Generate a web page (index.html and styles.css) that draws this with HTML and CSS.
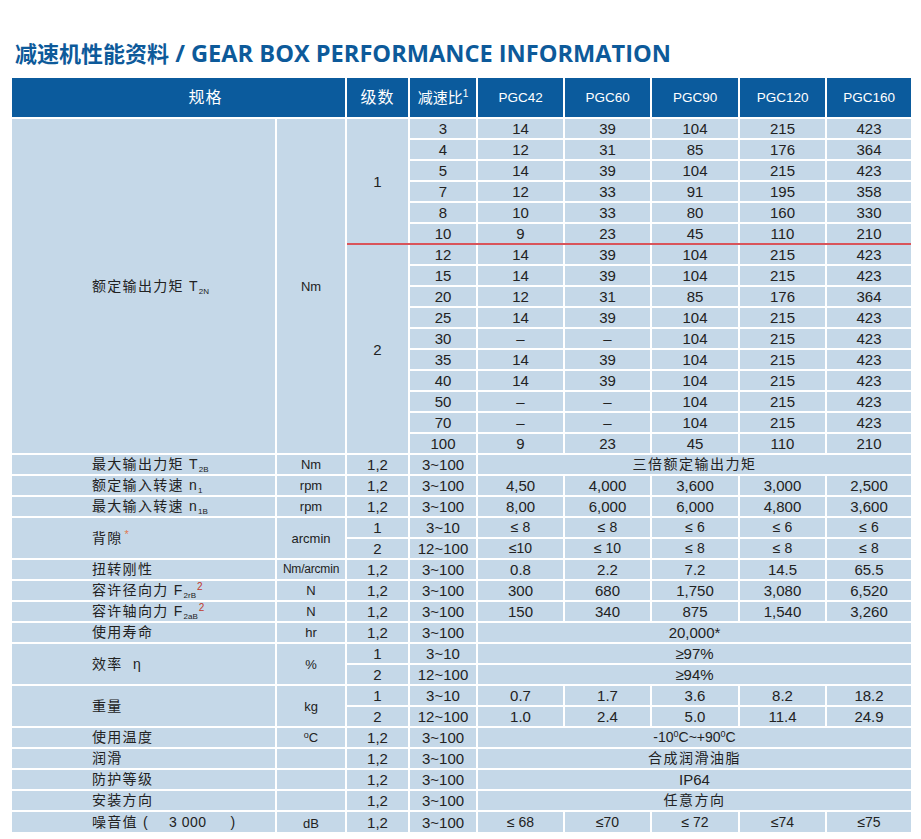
FILE: index.html
```html
<!DOCTYPE html>
<html lang="zh-CN">
<head>
<meta charset="utf-8">
<title>减速机性能资料</title>
<link rel="stylesheet" href="styles.css">
</head>
<body>
<div class="page">
  <h1 class="title"><span class="cn">减速机性能资料</span> / GEAR BOX PERFORMANCE INFORMATION</h1>
  <table class="spec">
    <colgroup>
      <col class="c-label"><col class="c-unit"><col class="c-stage"><col class="c-ratio">
      <col class="c-m1"><col class="c-m2"><col class="c-m3"><col class="c-m4"><col class="c-m5">
    </colgroup>
    <thead>
      <tr>
        <th colspan="2" class="h-spec">规格</th>
        <th class="h-cn">级数</th>
        <th class="h-ratio">减速比<sup>1</sup></th>
        <th>PGC42</th><th>PGC60</th><th>PGC90</th><th>PGC120</th><th>PGC160</th>
      </tr>
    </thead>
    <tbody>
      <tr><td rowspan="16" class="label">额定输出力矩 T<sub>2N</sub></td><td rowspan="16" class="unit">Nm</td><td rowspan="6" class="red-b">1</td><td>3</td><td>14</td><td>39</td><td>104</td><td>215</td><td>423</td></tr>
      <tr><td>4</td><td>12</td><td>31</td><td>85</td><td>176</td><td>364</td></tr>
      <tr><td>5</td><td>14</td><td>39</td><td>104</td><td>215</td><td>423</td></tr>
      <tr><td>7</td><td>12</td><td>33</td><td>91</td><td>195</td><td>358</td></tr>
      <tr><td>8</td><td>10</td><td>33</td><td>80</td><td>160</td><td>330</td></tr>
      <tr class="red-row-b"><td>10</td><td>9</td><td>23</td><td>45</td><td>110</td><td>210</td></tr>
      <tr class="red-row-t"><td rowspan="10">2</td><td>12</td><td>14</td><td>39</td><td>104</td><td>215</td><td>423</td></tr>
      <tr><td>15</td><td>14</td><td>39</td><td>104</td><td>215</td><td>423</td></tr>
      <tr><td>20</td><td>12</td><td>31</td><td>85</td><td>176</td><td>364</td></tr>
      <tr><td>25</td><td>14</td><td>39</td><td>104</td><td>215</td><td>423</td></tr>
      <tr><td>30</td><td>–</td><td>–</td><td>104</td><td>215</td><td>423</td></tr>
      <tr><td>35</td><td>14</td><td>39</td><td>104</td><td>215</td><td>423</td></tr>
      <tr><td>40</td><td>14</td><td>39</td><td>104</td><td>215</td><td>423</td></tr>
      <tr><td>50</td><td>–</td><td>–</td><td>104</td><td>215</td><td>423</td></tr>
      <tr><td>70</td><td>–</td><td>–</td><td>104</td><td>215</td><td>423</td></tr>
      <tr><td>100</td><td>9</td><td>23</td><td>45</td><td>110</td><td>210</td></tr>

      <tr><td class="label">最大输出力矩 T<sub>2B</sub></td><td class="unit">Nm</td><td>1,2</td><td>3~100</td><td colspan="5" class="cn-wide">三倍额定输出力矩</td></tr>
      <tr><td class="label">额定输入转速 n<sub>1</sub></td><td class="unit">rpm</td><td>1,2</td><td>3~100</td><td>4,50</td><td>4,000</td><td>3,600</td><td>3,000</td><td>2,500</td></tr>
      <tr><td class="label">最大输入转速 n<sub>1B</sub></td><td class="unit">rpm</td><td>1,2</td><td>3~100</td><td>8,00</td><td>6,000</td><td>6,000</td><td>4,800</td><td>3,600</td></tr>
      <tr><td rowspan="2" class="label">背隙<sup class="star">*</sup></td><td rowspan="2" class="unit">arcmin</td><td>1</td><td>3~10</td><td class="sm">≤ 8</td><td class="sm">≤ 8</td><td class="sm">≤ 6</td><td class="sm">≤ 6</td><td class="sm">≤ 6</td></tr>
      <tr><td>2</td><td>12~100</td><td class="sm">≤10</td><td class="sm">≤ 10</td><td class="sm">≤ 8</td><td class="sm">≤ 8</td><td class="sm">≤ 8</td></tr>
      <tr><td class="label">扭转刚性</td><td class="unit unit-sm">Nm/arcmin</td><td>1,2</td><td>3~100</td><td>0.8</td><td>2.2</td><td>7.2</td><td>14.5</td><td>65.5</td></tr>
      <tr><td class="label">容许径向力 F<sub>2rB</sub><sup class="red">2</sup></td><td class="unit">N</td><td>1,2</td><td>3~100</td><td>300</td><td>680</td><td>1,750</td><td>3,080</td><td>6,520</td></tr>
      <tr><td class="label">容许轴向力 F<sub>2aB</sub><sup class="red">2</sup></td><td class="unit">N</td><td>1,2</td><td>3~100</td><td>150</td><td>340</td><td>875</td><td>1,540</td><td>3,260</td></tr>
      <tr><td class="label">使用寿命</td><td class="unit">hr</td><td>1,2</td><td>3~100</td><td colspan="5">20,000*</td></tr>
      <tr><td rowspan="2" class="label">效率&nbsp; η</td><td rowspan="2" class="unit">%</td><td>1</td><td>3~10</td><td colspan="5">≥97%</td></tr>
      <tr><td>2</td><td>12~100</td><td colspan="5">≥94%</td></tr>
      <tr><td rowspan="2" class="label">重量</td><td rowspan="2" class="unit">kg</td><td>1</td><td>3~10</td><td>0.7</td><td>1.7</td><td>3.6</td><td>8.2</td><td>18.2</td></tr>
      <tr><td>2</td><td>12~100</td><td>1.0</td><td>2.4</td><td>5.0</td><td>11.4</td><td>24.9</td></tr>
      <tr><td class="label">使用温度</td><td class="unit"><sup class="deg">o</sup>C</td><td>1,2</td><td>3~100</td><td colspan="5" class="temp">-10<sup>0</sup>C~+90<sup>0</sup>C</td></tr>
      <tr><td class="label">润滑</td><td class="unit"></td><td>1,2</td><td>3~100</td><td colspan="5" class="cn-wide">合成润滑油脂</td></tr>
      <tr><td class="label">防护等级</td><td class="unit"></td><td>1,2</td><td>3~100</td><td colspan="5">IP64</td></tr>
      <tr><td class="label">安装方向</td><td class="unit"></td><td>1,2</td><td>3~100</td><td colspan="5" class="cn-wide">任意方向</td></tr>
      <tr><td class="label">噪音值 (<span class="noise">3 000</span>)</td><td class="unit unit-low">dB</td><td>1,2</td><td>3~100</td><td class="sm">≤ 68</td><td class="sm">≤70</td><td class="sm">≤ 72</td><td class="sm">≤74</td><td class="sm">≤75</td></tr>
    </tbody>
  </table>
</div>
</body>
</html>
```

FILE: styles.css
```css
body {
  margin: 0;
  background: #ffffff;
  color: #222222;
  font-family: "Liberation Sans", "Noto Sans CJK SC", sans-serif;
}

.page {
  padding: 39px 0 0 12px;
}

.title {
  margin: 0 0 11px 3px;
  font-family: "Open Sans", "Noto Sans CJK SC", sans-serif;
  font-weight: 700;
  font-size: 23.6px;
  line-height: 28px;
  color: #0d5a9a;
  white-space: nowrap;
}

.title .cn {
  font-size: 22px;
}

.spec {
  border-collapse: collapse;
  border-style: hidden;
  table-layout: fixed;
  width: 899px;
}

.c-label { width: 264px; }
.c-unit { width: 70px; }
.c-stage { width: 63px; }
.c-ratio { width: 68px; }
.c-m1 { width: 87px; }
.c-m2 { width: 87px; }
.c-m3 { width: 88px; }
.c-m4 { width: 87px; }
.c-m5 { width: 85px; }

.spec th,
.spec td {
  border: 2px solid #ffffff;
  padding: 0;
  text-align: center;
  vertical-align: middle;
  white-space: nowrap;
  overflow: hidden;
}

.spec thead tr {
  height: 40px;
}

.spec th {
  background: #0b5b9d;
  color: #ffffff;
  font-weight: 400;
  font-size: 13.5px;
  line-height: 16px;
}

.spec th.h-spec {
  padding-left: 54px;
  font-size: 16px;
  letter-spacing: 1px;
}

.spec th.h-cn {
  font-size: 16px;
  letter-spacing: 1px;
}

.spec th.h-ratio {
  font-size: 15px;
}

.spec th sup {
  font-size: 10px;
  vertical-align: 6px;
  line-height: 0;
}

.spec tbody tr {
  height: 21px;
}

.spec td {
  background: #c5d8e8;
  font-size: 15px;
  line-height: 17px;
}

.spec td.label {
  text-align: left;
  padding-left: 80px;
  font-size: 14px;
  letter-spacing: 1.3px;
}

.spec td.unit {
  font-size: 13px;
}

.spec td.unit-sm {
  font-size: 12px;
  letter-spacing: -0.2px;
}

.spec td.unit-low {
  vertical-align: bottom;
}

.spec td.sm {
  font-size: 14px;
}

.spec td.cn-wide {
  font-size: 14px;
  letter-spacing: 1.5px;
}

.spec td.temp {
  font-size: 14px;
}

.spec sub {
  font-size: 8px;
  letter-spacing: 0;
  vertical-align: -3px;
  line-height: 0;
}

.spec sup {
  font-size: 9px;
  line-height: 0;
  vertical-align: 5px;
}

.spec sup.red {
  color: #c0392b;
  font-size: 10px;
  margin-left: 1px;
}

.spec sup.star {
  color: #e0784f;
  font-size: 11px;
  margin-left: 2px;
}

.spec sup.deg {
  font-size: 9px;
  vertical-align: 4px;
}

.noise {
  padding: 0 24px 0 20px;
  letter-spacing: 0.5px;
}

.spec td.red-b,
.spec tr.red-row-b td {
  border-bottom-color: #d9545a;
}

.spec tr.red-row-t td {
  border-top-color: #d9545a;
}
```
